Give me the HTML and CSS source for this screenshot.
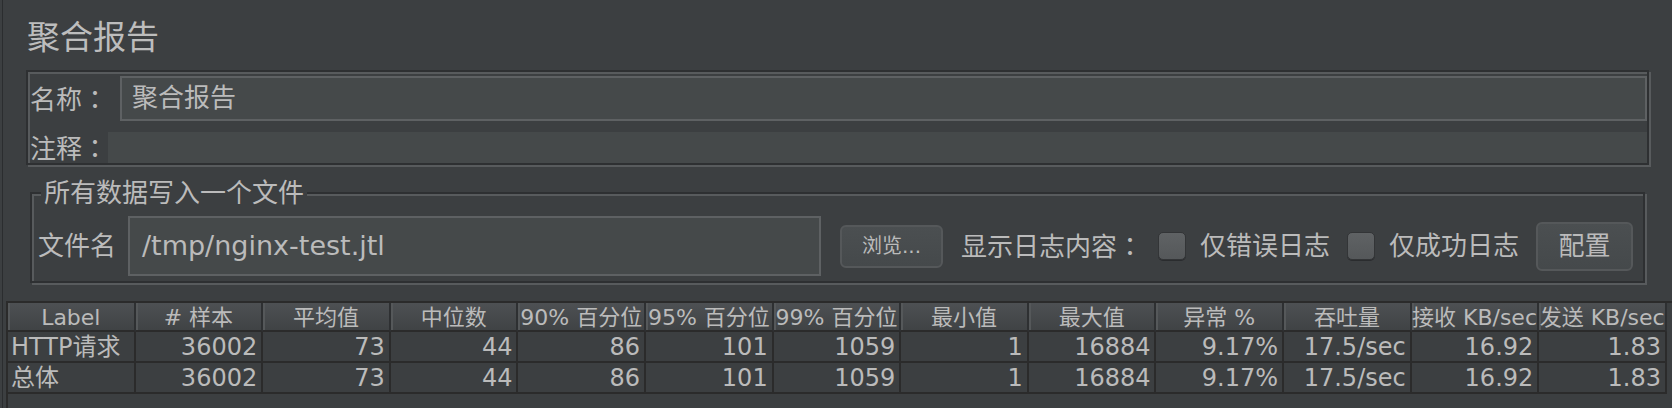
FILE: index.html
```html
<!DOCTYPE html>
<html lang="zh-CN">
<head>
<meta charset="utf-8">
<title>聚合报告</title>
<link rel="stylesheet" href="styles.css">
</head>
<body>
<div class="app">
  <h1 class="title">聚合报告</h1>

  <div class="name-panel">
    <div class="name-row">
      <span class="lbl">名称<span class="colon" lang="ja">：</span></span>
      <div class="text-field name-field">聚合报告</div>
    </div>
    <div class="comment-row">
      <span class="lbl">注释<span class="colon" lang="ja">：</span></span>
      <div class="comment-area"></div>
    </div>
  </div>

  <div class="file-panel">
    <span class="legend">所有数据写入一个文件</span>
    <div class="file-row">
      <span class="lbl file-lbl">文件名</span>
      <div class="text-field file-field">/tmp/nginx-test.jtl</div>
      <button class="btn browse">浏览...</button>
      <span class="log-lbl">显示日志内容<span class="colon" lang="ja">：</span></span>
      <span class="check check-err"><span class="box"></span>仅错误日志</span>
      <span class="check check-ok"><span class="box"></span>仅成功日志</span>
      <button class="btn config">配置</button>
    </div>
  </div>

  <div class="table-pane">
    <table class="results">
      <thead>
        <tr>
          <th>Label</th><th># 样本</th><th>平均值</th><th>中位数</th><th>90% 百分位</th><th>95% 百分位</th><th>99% 百分位</th><th>最小值</th><th>最大值</th><th>异常 %</th><th>吞吐量</th><th>接收 KB/sec</th><th>发送 KB/sec</th>
        </tr>
      </thead>
      <tbody>
        <tr>
          <td>HTTP请求</td><td>36002</td><td>73</td><td>44</td><td>86</td><td>101</td><td>1059</td><td>1</td><td>16884</td><td>9.17%</td><td>17.5/sec</td><td>16.92</td><td>1.83</td>
        </tr>
        <tr>
          <td>总体</td><td>36002</td><td>73</td><td>44</td><td>86</td><td>101</td><td>1059</td><td>1</td><td>16884</td><td>9.17%</td><td>17.5/sec</td><td>16.92</td><td>1.83</td>
        </tr>
      </tbody>
    </table>
  </div>
</div>
</body>
</html>
```

FILE: styles.css
```css
html, body {
  margin: 0;
  padding: 0;
  background: #3c3f41;
}

body {
  font-family: "DejaVu Sans", "Noto Sans CJK SC", sans-serif;
  color: #bbbbbb;
  overflow: hidden;
}

.app {
  margin-left: 2px;
  border-left: 1px solid #2b2d2f;
  height: 408px;
  box-sizing: border-box;
  display: flex;
  flex-direction: column;
}

.title {
  margin: 21px 0 0 24px;
  font-size: 33px;
  line-height: 33px;
  font-weight: normal;
  color: #bdbdbd;
}

.colon {
  font-family: "Noto Sans CJK JP", "Noto Sans CJK TC", sans-serif;
}

.lbl {
  flex: none;
  width: 78px;
  font-size: 26px;
  line-height: 26px;
  white-space: nowrap;
}

/* etched panels */
.name-panel,
.file-panel {
  border: 2px solid #2e3032;
  box-shadow: inset 2px 2px 0 #585b5d, 2px 2px 0 #585b5d;
  box-sizing: border-box;
}

.name-panel {
  margin: 16px 23px 0 23px;
  height: 95px;
  padding-top: 4px;
}

.name-row {
  display: flex;
  align-items: center;
  height: 45px;
  padding-left: 2px;
}

.text-field {
  box-sizing: border-box;
  background: #45494a;
  border: 2px solid #5e6163;
  white-space: nowrap;
  overflow: hidden;
}

.name-field {
  flex: 1;
  margin-left: 12px;
  height: 45px;
  padding-left: 10px;
  font-size: 26px;
  line-height: 41px;
}

.comment-row {
  display: flex;
  align-items: center;
  height: 31px;
  margin-top: 11px;
  padding-left: 2px;
}

.comment-area {
  flex: 1;
  height: 31px;
  background: #45494a;
}

.file-panel {
  position: relative;
  margin: 27px 27px 0 27px;
  height: 91px;
}

.legend {
  position: absolute;
  top: -14px;
  left: 9px;
  padding: 0 3px;
  background: #3c3f41;
  font-size: 26px;
  line-height: 26px;
  white-space: nowrap;
}

.file-row {
  display: flex;
  align-items: center;
  padding: 22px 10px 0 6px;
}

.file-field {
  flex: 1;
  margin-left: 12px;
  height: 60px;
  padding-left: 12px;
  font-size: 27px;
  line-height: 56px;
}

.btn {
  flex: none;
  box-sizing: border-box;
  padding: 0;
  font-family: inherit;
  color: #bbbbbb;
  background: linear-gradient(#4b4f51, #45494b);
  border: 2px solid #55585a;
  border-radius: 6px;
}

.browse {
  margin-left: 19px;
  width: 103px;
  height: 43px;
  font-size: 20px;
  line-height: 39px;
}

.log-lbl {
  flex: none;
  margin-left: 18px;
  width: 182px;
  font-size: 26px;
  line-height: 26px;
  white-space: nowrap;
}

.check {
  flex: none;
  display: flex;
  align-items: center;
  gap: 14px;
  font-size: 26px;
  line-height: 26px;
  white-space: nowrap;
}

.check-err { margin-left: 15px; }
.check-ok { margin-left: 17px; }

.box {
  width: 28px;
  height: 28px;
  box-sizing: border-box;
  border: 1px solid #333537;
  border-radius: 5px;
  background: linear-gradient(#5f6264, #55585a);
  box-shadow: 0 1px 0 #2a2c2e;
}

.config {
  margin-left: 17px;
  width: 97px;
  height: 49px;
  font-size: 26px;
  line-height: 45px;
}

/* results table */
.table-pane {
  flex: 1;
  margin: 18px 0 0 3px;
  padding-right: 5px;
  border-top: 2px solid #2b2b2b;
  border-left: 2px solid #2b2b2b;
}

.results {
  width: 100%;
  table-layout: fixed;
  border-collapse: separate;
  border-spacing: 0;
}

.results th {
  padding: 3px 0 0 0;
  height: 24px;
  font-size: 22px;
  line-height: 24px;
  font-weight: normal;
  text-align: center;
  white-space: nowrap;
  overflow: hidden;
  color: #bbbbbb;
  background: linear-gradient(#4d5053, #404345);
  border-right: 2px solid #2e3032;
  border-bottom: 2px solid #2b2b2b;
  box-shadow: inset 2px 0 0 #55585a;
}

.results td {
  padding: 1px 4px 0 0;
  height: 28px;
  font-size: 24px;
  line-height: 28px;
  text-align: right;
  white-space: nowrap;
  overflow: hidden;
  border-right: 2px solid #2b2b2b;
  border-bottom: 2px solid #2b2b2b;
}

.results td:first-child {
  text-align: left;
  padding-left: 3px;
}
```
